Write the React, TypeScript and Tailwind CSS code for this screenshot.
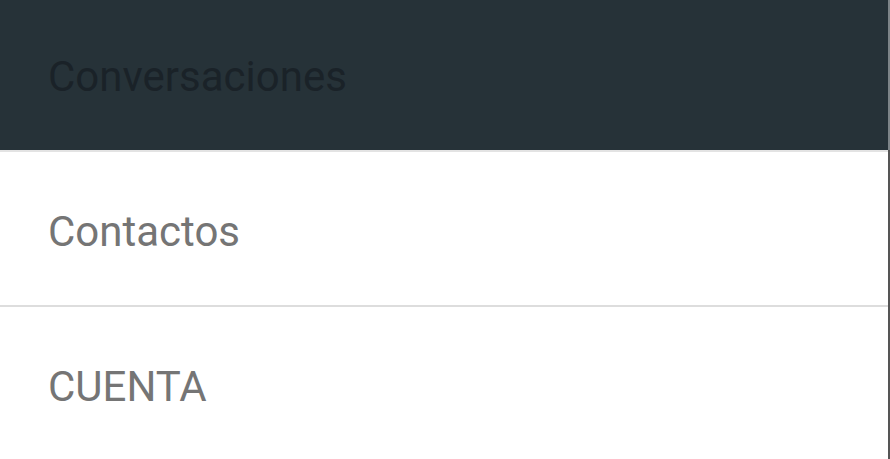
import * as React from "react";

const items = ["Contactos", "CUENTA"];

const App = () => {
  return (
    <div className="flex h-[459px] w-[890px] overflow-hidden bg-white font-['Roboto',sans-serif]">
      <div className="flex flex-1 flex-col">
        <div className="flex h-[150px] shrink-0 items-center bg-[#263238] pl-[48px] pt-[4px]">
          <span className="text-[42px] leading-none text-[#1a2228]">Conversaciones</span>
        </div>
        <div className="h-[2px] shrink-0 bg-[#e3e3e3]" />
        {items.map((item, i) => (
          <div key={i} className="shrink-0">
            {i > 0 && <div className="h-[2px] bg-[#dddddd]" />}
            <div className="flex h-[153px] items-center pl-[48px] pt-[7px]">
              <span className="text-[42px] leading-none text-[#757575]">{item}</span>
            </div>
          </div>
        ))}
      </div>
      <div className="flex w-[2px] flex-col">
        <div className="h-[150px] bg-[#7d8488]" />
        <div className="flex-1 bg-[#555555]" />
      </div>
    </div>
  );
};

export default App;
